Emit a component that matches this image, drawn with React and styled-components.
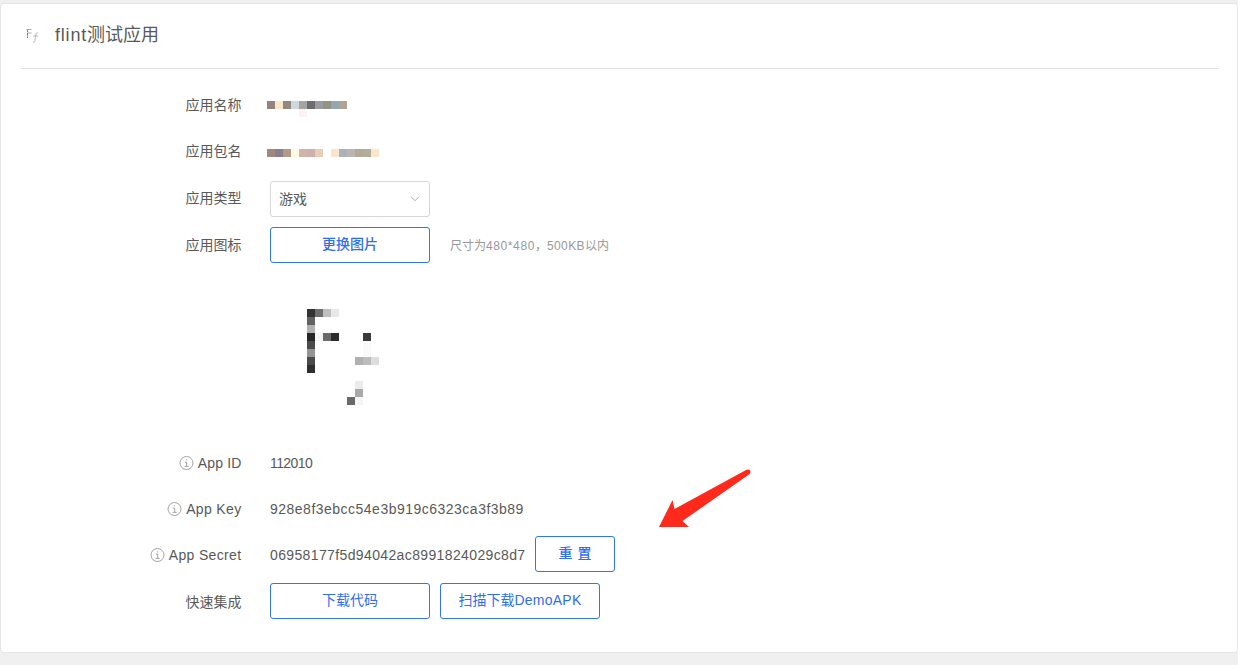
import React from "react";
import styled, { createGlobalStyle } from "styled-components";

const GlobalStyle = createGlobalStyle`
  * { box-sizing: border-box; }
  body {
    margin: 0;
    background: #f0f0f0;
    color: #595959;
    font: 14px/36px "Liberation Sans", "Noto Sans CJK SC", sans-serif;
    overflow: hidden;
  }
`;

const Page = styled.div`
  height: 665px;
  padding-top: 3px;
`;

const Card = styled.main`
  position: relative;
  height: 650px;
  padding: 0 18px 0 20px;
  background: #fff;
  border: 1px solid #e6e6e6;
  border-radius: 4px;
`;

const Header = styled.header`
  display: flex;
  height: 65px;
  padding-left: 4px;
  border-bottom: 1px solid #e1e1e1;
`;

const AppLogo = styled.svg`
  width: 16px;
  height: 20px;
  margin: 22px 14px 0 0;
`;

const Title = styled.h1`
  margin: 13px 0 0;
  font-size: 18px;
  font-weight: 400;
  line-height: 36px;
  white-space: nowrap;
`;

const Latin = styled.span`
  letter-spacing: ${(p) => p.$spacing}px;
`;

const Form = styled.div`
  display: flex;
  flex-direction: column;
  padding-top: 18px;
`;

const Row = styled.div`
  display: flex;
  height: ${(p) => p.$height || 46}px;
`;

const Label = styled.div`
  display: flex;
  align-items: center;
  justify-content: flex-end;
  gap: 4px;
  width: 220.5px;
  height: 36px;
  margin: ${(p) => p.$shift || 0}px 28.5px 0 0;
  white-space: nowrap;
  letter-spacing: ${(p) => p.$spacing || 0}px;
`;

const Value = styled.div`
  letter-spacing: ${(p) => p.$spacing || 0}px;
  margin-top: ${(p) => p.$shift || 0}px;
  width: ${(p) => (p.$width ? `${p.$width}px` : "auto")};
  white-space: nowrap;
`;

const Select = styled.div`
  display: flex;
  align-items: center;
  justify-content: space-between;
  width: 160px;
  height: 36px;
  padding: 0 9px 0 8px;
  border: 1px solid #d6d6d6;
  border-radius: 3px;
`;

const Button = styled.button`
  width: ${(p) => p.$width || 160}px;
  height: 36px;
  margin: 0 0 0 ${(p) => p.$gap || 0}px;
  padding: 0 0 2px;
  color: #2f6df6;
  background: #fff;
  border: 1px solid #2f75f5;
  border-radius: 3px;
  font: ${(p) => p.$weight || 400} 14px/32px "Liberation Sans", "Noto Sans CJK SC", sans-serif;
  word-spacing: 1px;
  white-space: nowrap;
`;

const Hint = styled.span`
  margin: 1px 0 0 20px;
  color: #999;
  font-size: 12px;
  white-space: nowrap;
`;

const MosaicSvg = styled.svg`
  display: block;
  flex: none;
  margin: ${(p) => p.$margin};
`;

const Preview = styled.div`
  height: 172px;
  padding: 36px 0 0 286px;
`;

const Arrow = styled.svg`
  position: absolute;
  left: 655px;
  top: 462px;
`;

const NAME_CELLS = [
  [0, 0, "#94827c"], [1, 0, "#fbe6cc"], [2, 0, "#918880"], [3, 0, "#cdd8de"],
  [4, 0, "#a4a4a2"], [5, 0, "#6c6d70"], [6, 0, "#9b9a9f"], [7, 0, "#929384"],
  [8, 0, "#94a8b0"], [9, 0, "#b0a392"], [4, 1, "#fbf3f0"],
];

const PACKAGE_CELLS = [
  [0, 0, "#a08880"], [1, 0, "#8b7f8e"], [2, 0, "#b09b86"], [3, 0, "#fff9e6"],
  [4, 0, "#d0b4a8"], [5, 0, "#ceb1ac"], [6, 0, "#e8ceb7"], [8, 0, "#fae6cc"],
  [9, 0, "#acb2b7"], [10, 0, "#bbb4af"], [11, 0, "#b4a896"], [12, 0, "#b0ad98"],
  [13, 0, "#fbe6cc"],
];

const ICON_CELLS = [
  [0, 0, "#333"], [1, 0, "#6e6e6e"], [2, 0, "#bfbfbf"], [3, 0, "#e8e8e8"],
  [0, 1, "#626262"], [0, 2, "#b0b0b0"],
  [0, 3, "#262626"], [1, 3, "#f5f5f5"], [2, 3, "#6b6b6b"], [3, 3, "#2d2d2d"], [7, 3, "#3b3b3b"],
  [0, 4, "#4a4a4a"], [7, 4, "#fafafa"], [0, 5, "#949494"], [7, 5, "#fafafa"],
  [0, 6, "#4a4a4a"], [6, 6, "#b1b1b1"], [7, 6, "#bcbcbc"], [8, 6, "#dddddd"],
  [0, 7, "#2e2e2e"], [6, 9, "#ececec"], [6, 10, "#a9a9a9"],
  [5, 11, "#6a6a6a"], [6, 11, "#f5f5f5"],
];

function Mosaic({ cells, columns, rows, margin }) {
  return (
    <MosaicSvg $margin={margin} width={columns * 8} height={rows * 8} shapeRendering="crispEdges">
      {cells.map(([x, y, fill]) => (
        <rect key={`${x}-${y}`} x={x * 8} y={y * 8} width="8" height="8" fill={fill} />
      ))}
    </MosaicSvg>
  );
}

function InfoIcon() {
  return (
    <svg width="15" height="15" viewBox="0 0 15 15" fill="none" stroke="#999" strokeWidth=".9">
      <circle cx="7.5" cy="7" r="6.5" />
      <path d="M6.9 3.9h1.3M5.8 6.2h1.9v4M5.6 10.4h4" />
    </svg>
  );
}

export default function App() {
  return (
    <>
      <GlobalStyle />
      <Page>
        <Card>
          <Header>
            <AppLogo viewBox="0 0 16 20" fill="none">
              <path d="M2.5 3v9" stroke="#777" strokeDasharray="3 .7" />
              <path d="M1.5 3.5h5M3 7h3.5" stroke="#aaa" />
              <path d="M13 7c-1.5-.5-2 .5-2.2 2L10 14.5c-.2 1.5-.8 2-2 1.5M8 10h5" stroke="#b0b0b0" strokeWidth=".9" />
            </AppLogo>
            <Title><Latin $spacing={0.8}>flint</Latin>测试应用</Title>
          </Header>
          <Form>
            <Row>
              <Label>应用名称</Label>
              <Mosaic cells={NAME_CELLS} columns={10} rows={2} margin="14px 0 0 -3px" />
            </Row>
            <Row $height={48}>
              <Label>应用包名</Label>
              <Mosaic cells={PACKAGE_CELLS} columns={14} rows={1} margin="16px 0 0 -3px" />
            </Row>
            <Row>
              <Label $shift={-1}>应用类型</Label>
              <Select>
                游戏
                <svg width="10" height="6" fill="none" stroke="#aaa">
                  <path d="M1 .7 5 4.7 9 .7" />
                </svg>
              </Select>
            </Row>
            <Row>
              <Label>应用图标</Label>
              <Button $weight={500}>更换图片</Button>
              <Hint>
                尺寸为<Latin $spacing={0.6}>480*480</Latin>，<Latin $spacing={0.4}>500KB</Latin>以内
              </Hint>
            </Row>
            <Preview>
              <Mosaic cells={ICON_CELLS} columns={9} rows={12} margin="0" />
            </Preview>
            <Row>
              <Label $spacing={0.15}><InfoIcon />App ID</Label>
              <Value $spacing={-0.6}>112010</Value>
            </Row>
            <Row $height={45}>
              <Label $spacing={0.35}><InfoIcon />App Key</Label>
              <Value $spacing={0.49}>928e8f3ebcc54e3b919c6323ca3f3b89</Value>
            </Row>
            <Row $height={47}>
              <Label $shift={1} $spacing={0.35}><InfoIcon />App Secret</Label>
              <Value $shift={1} $spacing={0.37} $width={255}>06958177f5d94042ac8991824029c8d7</Value>
              <Button $width={80} $gap={10} $weight={500}>重 置</Button>
            </Row>
            <Row>
              <Label $shift={1}>快速集成</Label>
              <Button>下载代码</Button>
              <Button $gap={10}>扫描下载<Latin $spacing={0.25}>DemoAPK</Latin></Button>
            </Row>
          </Form>
          <Arrow width="100" height="68" viewBox="656 466 100 68">
            <path d="M659 527 672.5 500 674.5 509 746.5 469.8Q750 468.8 750.6 471.5 750.5 473.5 749 474.5L682.5 521 689 527Z" fill="#ff2a1c" />
          </Arrow>
        </Card>
      </Page>
    </>
  );
}
